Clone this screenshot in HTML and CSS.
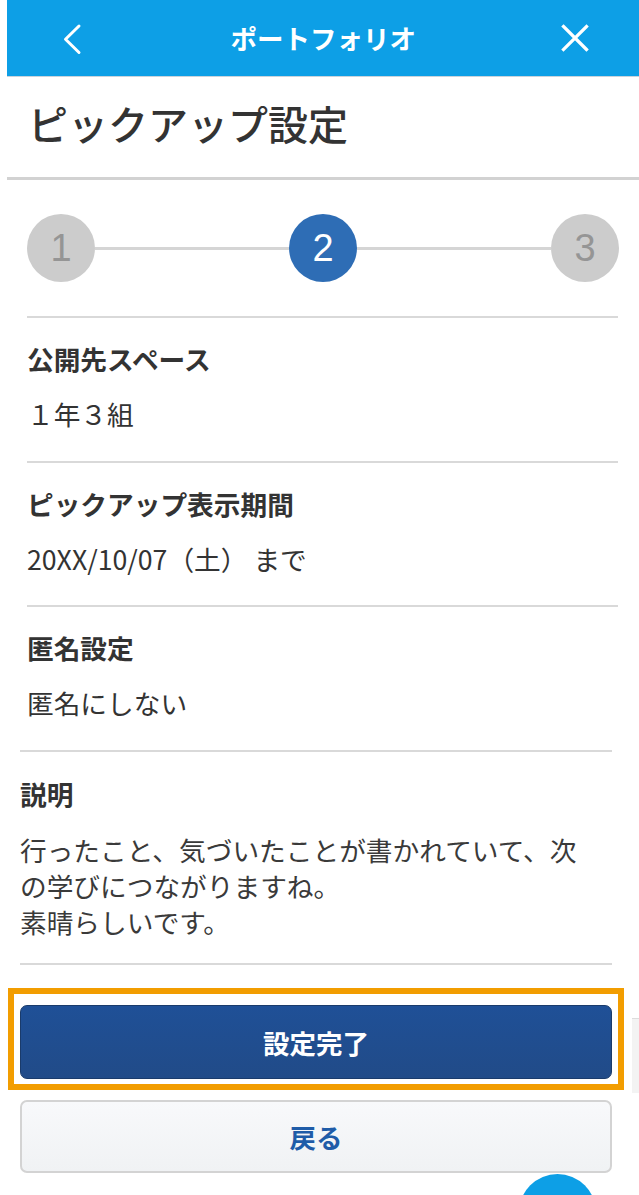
FILE: index.html
```html
<!DOCTYPE html>
<html lang="ja">
<head>
<meta charset="utf-8">
<title>ピックアップ設定</title>
<link rel="stylesheet" href="styles.css">
</head>
<body>
<div class="page">
  <header class="appbar">
    <button class="appbar-btn" aria-label="戻る">
      <svg width="44" height="44" viewBox="0 0 44 44"><polyline points="29,10 15.5,23.3 29,36.5" fill="none" stroke="#fff" stroke-width="3" stroke-linecap="round" stroke-linejoin="round"/></svg>
    </button>
    <h1 class="appbar-title">ポートフォリオ</h1>
    <button class="appbar-btn" aria-label="閉じる">
      <svg width="44" height="44" viewBox="0 0 44 44"><path d="M10.5 10.5 L33.5 33.5 M33.5 10.5 L10.5 33.5" fill="none" stroke="#fff" stroke-width="3.2" stroke-linecap="square"/></svg>
    </button>
  </header>

  <div class="page-title">
    <h2>ピックアップ設定</h2>
  </div>

  <div class="stepper">
    <span class="step">1</span>
    <span class="step-line"></span>
    <span class="step step-active">2</span>
    <span class="step-line"></span>
    <span class="step">3</span>
  </div>

  <div class="fields">
    <section class="field">
      <h3 class="field-label">公開先スペース</h3>
      <p class="field-value">１年３組</p>
    </section>
    <section class="field">
      <h3 class="field-label">ピックアップ表示期間</h3>
      <p class="field-value">20XX/10/07（土） まで</p>
    </section>
    <section class="field">
      <h3 class="field-label">匿名設定</h3>
      <p class="field-value">匿名にしない</p>
    </section>
  </div>

  <div class="fields fields-wide">
    <section class="field field-desc">
      <h3 class="field-label">説明</h3>
      <p class="field-text">行ったこと、気づいたことが書かれていて、次の学びにつながりますね。<br>素晴らしいです。</p>
    </section>
  </div>

  <div class="actions">
    <div class="focus-ring">
      <button class="btn btn-primary">設定完了</button>
    </div>
    <button class="btn btn-secondary">戻る</button>
  </div>
</div>
<div class="side-peek"></div>
<div class="fab"></div>
</body>
</html>
```

FILE: styles.css
```css
html, body {
  margin: 0;
  padding: 0;
  background: #ffffff;
  height: 1195px;
  overflow: hidden;
}

body {
  position: relative;
  font-family: "Noto Sans CJK JP", "Noto Sans", sans-serif;
  color: #333333;
}

.page {
  margin-left: 7px;
  width: 632px;
}

.appbar {
  height: 76px;
  background: #0d9fe6;
  border-bottom: 1px solid #c9d3dc;
  display: flex;
  align-items: center;
  padding: 0 42px 0 42.5px;
  box-sizing: content-box;
}

.appbar-btn {
  width: 44px;
  height: 44px;
  padding: 0;
  margin: 0;
  border: 0;
  background: transparent;
  display: block;
  flex: none;
}

.appbar-btn svg {
  display: block;
}

.appbar-title {
  flex: 1;
  margin: 0;
  text-align: center;
  color: #ffffff;
  font-size: 26.5px;
  font-weight: 700;
  line-height: 36px;
}

.page-title {
  padding: 18px 0 26px 21px;
  border-bottom: 3px solid #d2d2d2;
}

.page-title h2 {
  margin: 0;
  font-size: 40px;
  line-height: 56px;
  font-weight: 500;
  color: #333333;
}

.stepper {
  display: flex;
  align-items: center;
  padding: 34px 20px;
}

.step {
  width: 68px;
  height: 68px;
  border-radius: 50%;
  background: #cccccc;
  color: #959595;
  display: flex;
  align-items: center;
  justify-content: center;
  font-family: "Liberation Sans", Arial, sans-serif;
  font-size: 38px;
  line-height: 1;
  flex: none;
}

.step-active {
  background: #2e6db5;
  color: #ffffff;
}

.step-line {
  flex: 1;
  height: 3px;
  background: #d5d5d5;
}

.fields {
  margin: 0 21px 0 20px;
}

.fields-wide {
  margin: 0 27px 0 13px;
}

.field {
  border-top: 2px solid #d9d9d9;
  padding: 23px 0 28.5px;
}

.field-label {
  margin: 0 0 19px;
  font-size: 26.7px;
  line-height: 36px;
  font-weight: 700;
  color: #333333;
}

.field-value {
  margin: 0;
  font-size: 26.7px;
  line-height: 36px;
  font-weight: 400;
  color: #333333;
}

.field-desc {
  border-bottom: 2px solid #d9d9d9;
  padding: 24.5px 0 23px;
}

.field-desc .field-label {
  margin-bottom: 19.5px;
}

.field-text {
  margin: 0;
  padding-right: 10px;
  font-size: 26.7px;
  line-height: 36px;
  color: #3a3a3a;
}

.actions {
  padding-top: 23.5px;
}

.focus-ring {
  margin-left: 1px;
  width: 592px;
  border: 6px solid #f29d00;
  padding: 11px 6px 5px 6px;
  box-sizing: content-box;
}

.btn {
  display: flex;
  align-items: center;
  justify-content: center;
  width: 592px;
  margin: 0;
  padding: 0;
  box-sizing: border-box;
  font-family: "Noto Sans CJK JP", "Noto Sans", sans-serif;
  font-size: 26.5px;
  font-weight: 700;
  border-radius: 7px;
}

.btn-primary {
  height: 74px;
  background: linear-gradient(#1f5097, #214b88);
  border: 1px solid #1a3b6b;
  color: #ffffff;
}

.btn-secondary {
  height: 73px;
  margin: 10px 0 0 13px;
  background: linear-gradient(#f8f9fb, #f0f2f4);
  border: 2px solid #d3d3d3;
  color: #1f5ca8;
}

.side-peek {
  position: absolute;
  left: 632px;
  top: 1018px;
  width: 7px;
  height: 75px;
  background: #f3f3f3;
  border-top: 1px solid #dddddd;
  box-sizing: border-box;
}

.fab {
  position: absolute;
  left: 519px;
  top: 1174px;
  width: 77px;
  height: 77px;
  border-radius: 50%;
  background: #0d9fe6;
}
```
